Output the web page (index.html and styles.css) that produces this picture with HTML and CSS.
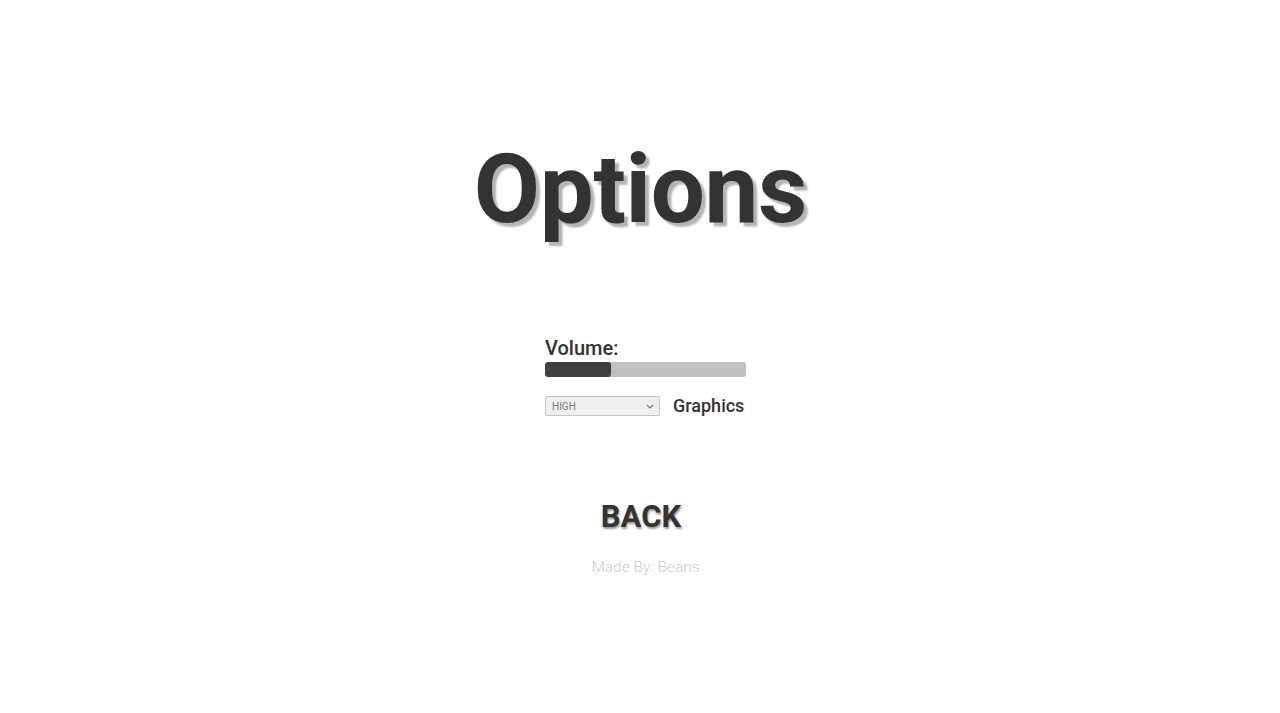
FILE: index.html
```html
<!DOCTYPE html>
<html lang="en">
<head>
<meta charset="utf-8">
<title>Options</title>
<link rel="stylesheet" href="styles.css">
</head>
<body>
<main class="menu">
  <h1 class="title">Options</h1>
  <section class="controls">
    <label class="volume-label" for="volume">Volume:</label>
    <div class="slider" id="volume" role="slider" aria-valuenow="33">
      <div class="slider-fill" style="width: 33%"></div>
    </div>
    <div class="graphics-row">
      <div class="select-wrap">
        <select class="select" id="graphics">
          <option>HIGH</option>
          <option>MEDIUM</option>
          <option>LOW</option>
        </select>
        <svg class="chevron" width="8" height="5" viewBox="0 0 8 5" aria-hidden="true">
          <path d="M1 1 L4 4 L7 1" fill="none" stroke="#777" stroke-width="1.1"/>
        </svg>
      </div>
      <label class="graphics-label" for="graphics">Graphics</label>
    </div>
  </section>
  <button class="back">BACK</button>
  <p class="credit">Made By: Beans</p>
</main>
</body>
</html>
```

FILE: styles.css
```css
html, body {
  margin: 0;
  padding: 0;
  background: #ffffff;
}

body {
  font-family: Roboto, "Liberation Sans", sans-serif;
  color: #333333;
}

.menu {
  display: flex;
  flex-direction: column;
  align-items: center;
  padding-top: 141px;
}

.title {
  margin: 0 0 0 1px;
  font-size: 96px;
  line-height: 1;
  font-weight: 700;
  color: #333333;
  text-shadow: 4px 4px 2px #b4b4b4;
  letter-spacing: -0.3px;
}

.controls {
  width: 201px;
  margin-top: 99px;
  margin-left: 11px;
  display: flex;
  flex-direction: column;
}

.volume-label {
  font-size: 20px;
  line-height: 24px;
  font-weight: 500;
  color: #333333;
}

.slider {
  margin-top: 2px;
  height: 15px;
  background: #c0c0c0;
  border-radius: 3px;
  overflow: hidden;
}

.slider-fill {
  height: 100%;
  background: #404040;
  border-radius: 3px;
}

.graphics-row {
  margin-top: 19px;
  display: flex;
  align-items: center;
  gap: 13px;
}

.select-wrap {
  position: relative;
  width: 115px;
  height: 20px;
}

.select {
  display: block;
  appearance: none;
  -webkit-appearance: none;
  width: 100%;
  height: 100%;
  margin: 0;
  padding: 0 0 0 6px;
  box-sizing: border-box;
  border: 1px solid #c4c4c4;
  border-radius: 2px;
  background: #efefef;
  font-family: Roboto, "Liberation Sans", sans-serif;
  font-size: 10px;
  color: #7a7a7a;
}

.chevron {
  position: absolute;
  right: 6px;
  top: 8px;
  pointer-events: none;
}

.graphics-label {
  font-size: 18px;
  line-height: 20px;
  font-weight: 500;
  color: #333333;
}

.back {
  margin-top: 85px;
  margin-left: 2px;
  padding: 0;
  border: none;
  background: none;
  font-family: Roboto, "Liberation Sans", sans-serif;
  font-size: 31px;
  line-height: 1;
  font-weight: 700;
  color: #333333;
  text-shadow: 1px 2px 2px rgba(0, 0, 0, 0.4);
}

.credit {
  margin: 26px 0 0 11px;
  font-size: 15.5px;
  line-height: 18px;
  font-weight: 300;
  color: #cccccc;
}
```
